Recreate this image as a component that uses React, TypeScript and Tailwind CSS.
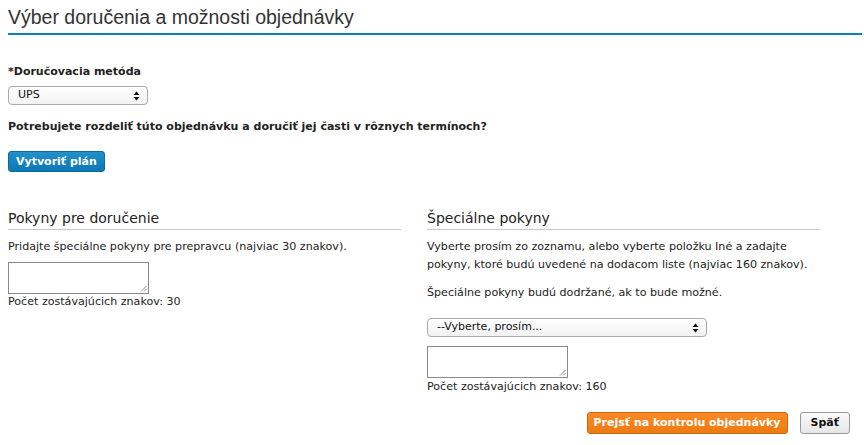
import React from "react";

const verdana = { fontFamily: '"DejaVu Sans", Verdana, sans-serif' };

function SelectArrows() {
  return (
    <svg width="7" height="10" viewBox="0 0 7 10" className="absolute right-[7px] top-1/2 -translate-y-1/2">
      <path d="M3.5 0.5 L6.5 4 L0.5 4 Z" fill="#111" />
      <path d="M3.5 9.5 L6.5 6 L0.5 6 Z" fill="#111" />
    </svg>
  );
}

function FakeSelect({ label, w }: { label: string; w: string }) {
  return (
    <div className={`relative ${w} h-[19px] rounded-[4px] border border-[#a9a9a9] bg-gradient-to-b from-white to-[#f2f2f2] flex items-center pl-[9px] text-[11px] text-[#111]`}>
      <span>{label}</span>
      <SelectArrows />
    </div>
  );
}

function TextArea() {
  return (
    <div className="relative w-[141px] h-[32px] border border-[#8a8a8a] bg-white">
      <svg width="7" height="7" viewBox="0 0 7 7" className="absolute right-[1px] bottom-[1px]">
        <path d="M6.5 1 L1 6.5 M6.5 4 L4 6.5" stroke="#777" strokeWidth="0.8" />
      </svg>
    </div>
  );
}

export default function App() {
  return (
    <div className="w-[864px] h-[445px] bg-white text-[#222] overflow-hidden" style={verdana}>
      <div className="pl-[8px] pr-[2px] pt-[6px]">
        <h1
          className="text-[19.5px] leading-[23px] text-[#333] pb-[4px] border-b-2 border-[#0a80bf]"
          style={{ fontFamily: '"Liberation Sans", Arial, sans-serif' }}
        >
          Výber doručenia a možnosti objednávky
        </h1>
      </div>

      <div className="px-[8px]">
        <div className="mt-[30px] text-[11px] font-bold leading-[14px]">*Doručovacia metóda</div>
        <div className="mt-[7px]">
          <FakeSelect label="UPS" w="w-[140px]" />
        </div>
        <div className="mt-[15px] text-[11px] font-bold leading-[14px]">
          Potrebujete rozdeliť túto objednávku a doručiť jej časti v rôznych termínoch?
        </div>
        <button className="mt-[17px] h-[21px] px-[7px] rounded-[3px] border border-[#0f6a99] bg-gradient-to-b from-[#2290cc] to-[#0b78b3] text-white text-[11px] font-bold leading-[14px]">
          Vytvoriť plán
        </button>

        <div className="mt-[36px] grid grid-cols-[393px_393px] gap-[26px]">
          <div>
            <h2 className="text-[14px] leading-[20px] font-normal text-[#222] pb-[1px] border-b border-[#c8c8c8]">
              Pokyny pre doručenie
            </h2>
            <p className="mt-[8px] text-[11.1px] leading-[18px]">
              Pridajte špeciálne pokyny pre prepravcu (najviac 30 znakov).
            </p>
            <div className="mt-[6px]">
              <TextArea />
            </div>
            <div className="text-[11.1px] leading-[16px]">Počet zostávajúcich znakov: 30</div>
          </div>
          <div>
            <h2 className="text-[14px] leading-[20px] font-normal text-[#222] pb-[1px] border-b border-[#c8c8c8]">
              Špeciálne pokyny
            </h2>
            <p className="mt-[8px] text-[11.1px] leading-[18px]">
              Vyberte prosím zo zoznamu, alebo vyberte položku Iné a zadajte pokyny, ktoré budú uvedené na dodacom liste (najviac 160 znakov).
            </p>
            <p className="mt-[10px] text-[11.1px] leading-[18px]">
              Špeciálne pokyny budú dodržané, ak to bude možné.
            </p>
            <div className="mt-[16px]">
              <FakeSelect label="--Vyberte, prosím..." w="w-[280px]" />
            </div>
            <div className="mt-[9px]">
              <TextArea />
            </div>
            <div className="text-[11.1px] leading-[17px]">Počet zostávajúcich znakov: 160</div>
          </div>
        </div>

        <div className="mt-[17px] flex justify-end gap-[12px] pr-[6px]">
          <button className="h-[22px] px-[6px] rounded-[3px] border border-[#c9690f] bg-gradient-to-b from-[#f98a25] to-[#ee7b10] text-white text-[11px] font-bold leading-[14px]">
            Prejsť na kontrolu objednávky
          </button>
          <button className="h-[22px] px-[10px] rounded-[3px] border border-[#9a9a9a] bg-gradient-to-b from-[#fafafa] to-[#e6e6e6] text-[#111] text-[11px] font-bold leading-[14px]">
            Späť
          </button>
        </div>
      </div>
    </div>
  );
}
